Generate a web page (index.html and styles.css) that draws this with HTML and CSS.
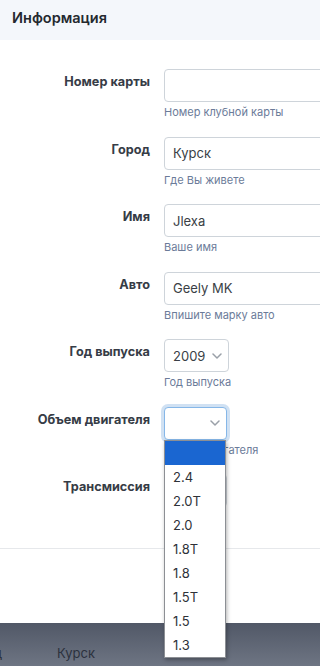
FILE: index.html
```html
<!DOCTYPE html>
<html lang="ru">
<head>
<meta charset="utf-8">
<title>Информация</title>
<link rel="stylesheet" href="styles.css">
</head>
<body>
<div class="page">
  <div class="header"><h1 class="title">Информация</h1></div>
  <div class="form">
    <div class="row">
      <div class="lbl">Номер карты</div>
      <div class="field">
        <div class="ctl"></div>
        <div class="help">Номер клубной карты</div>
      </div>
    </div>
    <div class="row">
      <div class="lbl">Город</div>
      <div class="field">
        <div class="ctl">Курск</div>
        <div class="help">Где Вы живете</div>
      </div>
    </div>
    <div class="row">
      <div class="lbl">Имя</div>
      <div class="field">
        <div class="ctl">Jlexa</div>
        <div class="help">Ваше имя</div>
      </div>
    </div>
    <div class="row">
      <div class="lbl">Авто</div>
      <div class="field">
        <div class="ctl">Geely MK</div>
        <div class="help">Впишите марку авто</div>
      </div>
    </div>
    <div class="row">
      <div class="lbl">Год выпуска</div>
      <div class="field">
        <div class="ctl sel sel-year">2009<svg class="chev" viewBox="0 0 10 6" width="10" height="6"><path d="M1 1l4 4 4-4" fill="none" stroke="#9aa0a8" stroke-width="1.5" stroke-linecap="round" stroke-linejoin="round"/></svg></div>
        <div class="help">Год выпуска</div>
      </div>
    </div>
    <div class="row">
      <div class="lbl">Объем двигателя</div>
      <div class="field">
        <div class="ctl sel sel-eng focus"><svg class="chev" viewBox="0 0 10 6" width="10" height="6"><path d="M1 1l4 4 4-4" fill="none" stroke="#9aa0a8" stroke-width="1.5" stroke-linecap="round" stroke-linejoin="round"/></svg></div>
        <div class="help">Объем двигателя</div>
        <ul class="dropdown">
          <li class="opt active">&nbsp;</li>
          <li class="opt">2.4</li>
          <li class="opt">2.0T</li>
          <li class="opt">2.0</li>
          <li class="opt">1.8T</li>
          <li class="opt">1.8</li>
          <li class="opt">1.5T</li>
          <li class="opt">1.5</li>
          <li class="opt">1.3</li>
        </ul>
      </div>
    </div>
    <div class="row last">
      <div class="lbl">Трансмиссия</div>
      <div class="field">
        <div class="ctl sel sel-eng"></div>
      </div>
    </div>
  </div>
  <div class="sep"></div>
  <div class="space"></div>
  <div class="footer">
    <span class="fcut">д</span>
    <span class="ftext">Курск</span>
  </div>
</div>
</body>
</html>
```
FILE: styles.css
```css
html, body {
  margin: 0;
  padding: 0;
  background: #ffffff;
}
.page {
  font-family: Inter, "Noto Sans", "Liberation Sans", sans-serif;
  color: #333a44;
  height: 666px;
  display: flex;
  flex-direction: column;
  overflow: hidden;
}
.header {
  height: 40px;
  background: #f4f7fb;
  display: flex;
  align-items: center;
  padding-left: 12px;
  flex: none;
}
.title {
  margin: 0 0 5px 0;
  font-size: 14.5px;
  font-weight: 600;
  color: #24292f;
}
.form {
  padding-top: 29px;
  flex: none;
}
.row {
  display: grid;
  grid-template-columns: 150px 200px;
  column-gap: 14px;
  margin-bottom: 17.5px;
}
.row.last {
  margin-bottom: 0;
}
.lbl {
  text-align: right;
  font-size: 12.7px;
  font-weight: 700;
  line-height: 16px;
  padding-top: 5px;
  color: #363c46;
  white-space: nowrap;
}
.field {
  position: relative;
}
.ctl {
  box-sizing: border-box;
  height: 33px;
  width: 200px;
  border: 1px solid #ced4da;
  border-radius: 4px;
  padding: 0 8px;
  display: flex;
  align-items: center;
  font-size: 13px;
  color: #3a3f46;
  background: #fff;
}
.sel {
  justify-content: space-between;
  padding-right: 6px;
}
.sel-year {
  width: 65px;
}
.sel-eng {
  width: 63px;
  justify-content: flex-end;
}
.chev {
  flex: none;
}
.focus {
  border-color: #86b7e8;
  box-shadow: 0 0 0 3px rgba(120, 170, 220, 0.35);
}
.help {
  margin-top: 3px;
  font-size: 11px;
  line-height: 14px;
  color: #6b7b99;
  white-space: nowrap;
}
.dropdown {
  position: absolute;
  top: 33px;
  left: 0;
  width: 62px;
  box-sizing: border-box;
  margin: 0;
  padding: 0;
  list-style: none;
  background: #fff;
  border: 1px solid #8c8f94;
  box-shadow: 1px 2px 4px rgba(0, 0, 0, 0.3);
  z-index: 5;
}
.opt {
  height: 24px;
  line-height: 24px;
  padding-left: 8px;
  font-size: 13px;
  color: #2e3238;
}
.opt.active {
  background: #1a66d1;
}
.sep {
  margin-top: 41px;
  height: 1px;
  background: #e6e8eb;
  flex: none;
}
.space {
  height: 74px;
  flex: none;
}
.footer {
  flex: 1;
  background: linear-gradient(#515867, #6e7583);
  display: flex;
  align-items: flex-end;
  padding-bottom: 5px;
  font-size: 13px;
  color: #2c323e;
}
.fcut {
  margin-left: -6px;
  width: 63px;
}
.ftext {
  line-height: 16px;
}
```
